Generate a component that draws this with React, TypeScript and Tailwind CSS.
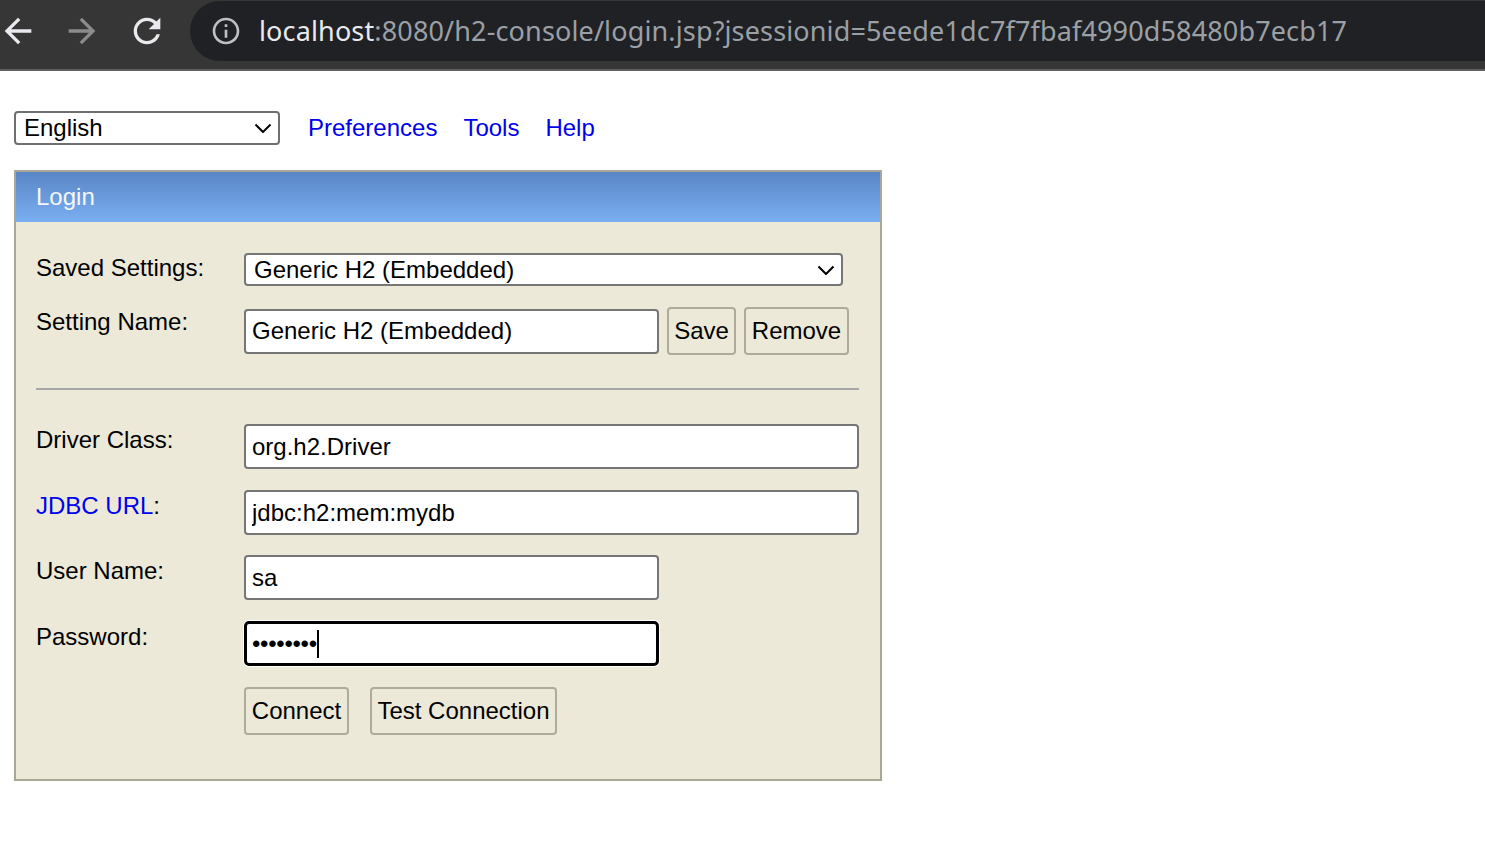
import React from "react";

function Chevron({ className }: { className?: string }) {
  return (
    <svg viewBox="0 0 18 10" className={className} fill="none" stroke="currentColor" strokeWidth={2}>
      <path d="M1.5 1.5l7.5 7.5 7.5-7.5" />
    </svg>
  );
}

function TopBar() {
  return (
    <div className="h-[71px] bg-[#363636] border-b-2 border-[#5e5e5e]">
      <div className="h-[62px] flex items-center">
        {/* back */}
        <svg viewBox="0 0 24 24" className="w-[40px] h-[40px] ml-[-2px] shrink-0 text-[#e8eaed]" fill="currentColor">
          <path d="M20 11H7.83l5.59-5.59L12 4l-8 8 8 8 1.41-1.41L7.83 13H20v-2z" />
        </svg>
        {/* forward */}
        <svg viewBox="0 0 24 24" className="w-[40px] h-[40px] ml-[23.5px] shrink-0 text-[#8b8b8b]" fill="currentColor">
          <path d="M4 11h12.17l-5.59-5.59L12 4l8 8-8 8-1.41-1.41L16.17 13H4v-2z" />
        </svg>
        {/* reload */}
        <svg viewBox="0 0 24 24" className="w-[40px] h-[40px] ml-[25px] shrink-0 text-[#e8eaed]" fill="currentColor">
          <path d="M17.65 6.35C16.2 4.9 14.21 4 12 4c-4.42 0-7.99 3.58-7.99 8s3.57 8 7.99 8c3.73 0 6.84-2.55 7.73-6h-2.08c-.82 2.33-3.04 4-5.65 4-3.31 0-6-2.69-6-6s2.69-6 6-6c1.66 0 3.14.69 4.22 1.78L13 11h7V4l-2.35 2.35z" />
        </svg>
        {/* omnibox */}
        <div className="flex-1 ml-[23.5px] h-[60px] rounded-l-full bg-[#202124] flex items-center pl-[20px]">
          <svg viewBox="0 0 24 24" className="w-[32px] h-[32px] shrink-0 text-[#bdc1c6]" fill="currentColor">
            <path d="M11 7h2v2h-2zm0 4h2v6h-2zm1-9C6.48 2 2 6.48 2 12s4.48 10 10 10 10-4.48 10-10S17.52 2 12 2zm0 18c-4.41 0-8-3.59-8-8s3.59-8 8-8 8 3.59 8 8-3.59 8-8 8z" />
          </svg>
          <div className="ml-[17px] mt-[-2px] font-['Noto_Sans',sans-serif] text-[27px] leading-none whitespace-nowrap tracking-[0.14px]">
            <span className="text-[#e8eaed]">localhost</span>
            <span className="text-[#9aa0a6]">:8080/h2-console/login.jsp?jsessionid=5eede1dc7f7fbaf4990d58480b7ecb17</span>
          </div>
        </div>
      </div>
    </div>
  );
}

function Row({ label, children, top = "pt-[2px]" }: { label: React.ReactNode; children: React.ReactNode; top?: string }) {
  return (
    <div className="flex items-start">
      <div className={`w-[208px] shrink-0 leading-[28px] ${top}`}>{label}</div>
      <div className="flex-1 flex items-center">{children}</div>
    </div>
  );
}

const inputCls =
  "h-[45px] bg-white border-2 border-[#767676] rounded-[4px] px-[6px] text-[24px] text-black outline-none";
const btnCls =
  "h-[48px] bg-[#ece9d8] border-2 border-[#aeab9c] rounded-[4px] text-[24px] text-black flex items-center justify-center";

export default function App() {
  return (
    <div className="min-h-screen bg-white">
      <TopBar />

      <div className="pl-[14px] pt-[40px] font-['Liberation_Sans',Arial,sans-serif] text-[24px] text-black">
        {/* language + links */}
        <div className="flex items-center h-[34px]">
          <div className="w-[266px] h-[34px] border-2 border-[#6f6f6f] rounded-[4px] bg-white flex items-center justify-between pl-[8px] pr-[6px]">
            <span>English</span>
            <Chevron className="w-[18px] h-[10px]" />
          </div>
          <a className="ml-[28px] text-[#0000ee]">Preferences</a>
          <a className="ml-[26px] text-[#0000ee]">Tools</a>
          <a className="ml-[26px] text-[#0000ee]">Help</a>
        </div>

        {/* login panel */}
        <div className="mt-[25px] w-[868px] border-2 border-[#aaa797]">
          <div className="h-[50px] bg-linear-to-b from-[#5a86c6] to-[#7aaff2] pl-[20px] flex items-center text-[#f4f7fc]">
            Login
          </div>
          <div className="bg-[#ece9d8] pl-[20px] pr-[21px] pt-[31px] pb-[44px]">
            <Row label="Saved Settings:" top="pt-[1px]">
              <div className="w-[599px] h-[33px] bg-white border-2 border-[#767676] rounded-[4px] flex items-center justify-between pl-[8px] pr-[6px]">
                <span>Generic H2 (Embedded)</span>
                <Chevron className="w-[18px] h-[10px]" />
              </div>
            </Row>

            <div className="mt-[21px]">
              <Row label="Setting Name:" top="pt-[1px]">
                <div className="flex items-center gap-[8px] h-[48px]">
                  <input readOnly value="Generic H2 (Embedded)" className={`${inputCls} w-[415px] h-[44px]`} />
                  <button className={`${btnCls} w-[69px]`}>Save</button>
                  <button className={`${btnCls} w-[105px]`}>Remove</button>
                </div>
              </Row>
            </div>

            <div className="mt-[33px] h-[2px] bg-[#a7a7a7]" />

            <div className="mt-[34px]">
              <Row label="Driver Class:">
                <input readOnly value="org.h2.Driver" className={`${inputCls} w-full`} />
              </Row>
            </div>

            <div className="mt-[21px]">
              <Row
                label={
                  <>
                    <a className="text-[#0000ee]">JDBC URL</a>:
                  </>
                }
              >
                <input readOnly value="jdbc:h2:mem:mydb" className={`${inputCls} w-full`} />
              </Row>
            </div>

            <div className="mt-[20px]">
              <Row label="User Name:">
                <input readOnly value="sa" className={`${inputCls} w-[415px]`} />
              </Row>
            </div>

            <div className="mt-[21px]">
              <Row label="Password:">
                <div className="w-[415px] h-[45px] bg-white border-[3px] border-black rounded-[5px] ring-1 ring-white flex items-center pl-[5px]">
                  <span className="leading-none tracking-[-0.3px]">••••••••</span>
                  <span className="w-[2px] h-[28px] bg-black" />
                </div>
              </Row>
            </div>

            <div className="mt-[21px] pl-[208px] flex items-center gap-[21px]">
              <button className={`${btnCls} w-[105px]`}>Connect</button>
              <button className={`${btnCls} w-[187px]`}>Test Connection</button>
            </div>
          </div>
        </div>
      </div>
    </div>
  );
}
